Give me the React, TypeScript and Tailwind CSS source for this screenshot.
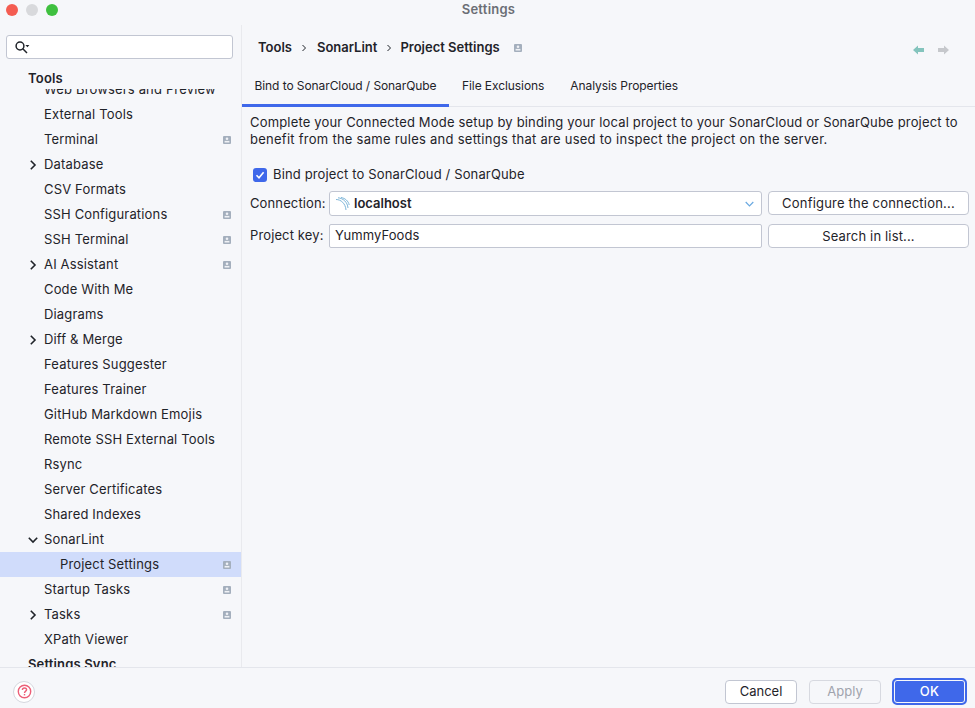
import React from "react";

const font = { fontFamily: "Inter, 'Noto Sans', sans-serif" };

function ProjectIcon({ className = "" }: { className?: string }) {
  return (
    <svg width="8" height="8" viewBox="0 0 8 8" className={className}>
      <rect width="8" height="8" rx="1" fill="#a4afbd" />
      <circle cx="4" cy="2.8" r="1.3" fill="#f0f2f6" />
      <rect x="1.6" y="4.9" width="4.8" height="1.6" fill="#f0f2f6" />
    </svg>
  );
}

function Chevron({ open }: { open?: boolean }) {
  return (
    <svg width="12" height="12" viewBox="0 0 12 12" fill="none" stroke="#1f2329" strokeWidth="1.6">
      {open ? <path d="M1.8 3.8 6 8 10.2 3.8" /> : <path d="M3.8 1.8 8 6 3.8 10.2" />}
    </svg>
  );
}

type Row = { label: string; chevron?: "open" | "closed"; project?: boolean; indent?: boolean; selected?: boolean; bold?: boolean };

const rows: Row[] = [
  { label: "Web Browsers and Preview" },
  { label: "External Tools" },
  { label: "Terminal", project: true },
  { label: "Database", chevron: "closed" },
  { label: "CSV Formats" },
  { label: "SSH Configurations", project: true },
  { label: "SSH Terminal", project: true },
  { label: "AI Assistant", chevron: "closed", project: true },
  { label: "Code With Me" },
  { label: "Diagrams" },
  { label: "Diff & Merge", chevron: "closed" },
  { label: "Features Suggester" },
  { label: "Features Trainer" },
  { label: "GitHub Markdown Emojis" },
  { label: "Remote SSH External Tools" },
  { label: "Rsync" },
  { label: "Server Certificates" },
  { label: "Shared Indexes" },
  { label: "SonarLint", chevron: "open" },
  { label: "Project Settings", project: true, indent: true, selected: true },
  { label: "Startup Tasks", project: true },
  { label: "Tasks", chevron: "closed", project: true },
  { label: "XPath Viewer" },
  { label: "Settings Sync", bold: true },
];

function SideRow({ r }: { r: Row }) {
  return (
    <div className={`h-[25px] flex items-center shrink-0 text-[13px] tracking-[0.16px] text-[#1f2329] ${r.selected ? "bg-[#d0dcfb]" : ""}`}>
      <div className={`${r.bold ? "w-[28px]" : r.indent ? "w-[60px]" : "w-[44px]"} shrink-0 flex justify-end pr-[5px]`}>
        {r.chevron && <Chevron open={r.chevron === "open"} />}
      </div>
      <span className={`flex-1 whitespace-nowrap ${r.bold ? "font-semibold" : ""}`}>{r.label}</span>
      {r.project && <ProjectIcon className="mr-[10px]" />}
    </div>
  );
}

function Button({ children, className = "" }: { children: React.ReactNode; className?: string }) {
  return (
    <div className={`flex items-center justify-center bg-white border border-[#c2c6d2] rounded-[4px] pt-[1px] text-[13px] tracking-[0.2px] text-[#1f2329] ${className}`}>
      {children}
    </div>
  );
}

export default function App() {
  return (
    <div className="w-[975px] h-[708px] bg-[#f6f7fa] flex flex-col overflow-hidden text-[#1f2329]" style={font}>
      <div className="h-[20px] shrink-0 flex items-center relative">
        <div className="flex gap-[8px] pl-[6px]">
          <div className="w-[12px] h-[12px] rounded-full bg-[#f45c51]" />
          <div className="w-[12px] h-[12px] rounded-full bg-[#d8d9dc]" />
          <div className="w-[12px] h-[12px] rounded-full bg-[#3fc03f]" />
        </div>
        <div className="absolute left-0 right-0 text-center pl-[2px] text-[13px] font-semibold text-[#6b6e75] tracking-[0.25px]">Settings</div>
      </div>

      <div className="flex-1 flex min-h-0 pt-[5px]">
        <aside className="w-[242px] shrink-0 border-r border-[#e9eaee] flex flex-col min-h-0">
          <div className="pl-[6px] pr-[8px] pt-[10px] shrink-0">
            <div className="h-[24px] bg-white border border-[#c2c6d2] rounded-[3px] flex items-center pl-[8px]">
              <svg width="15" height="13" viewBox="0 0 15 13" fill="none" stroke="#1f2329" strokeWidth="1.5">
                <circle cx="5" cy="5" r="3.9" />
                <path d="M7.8 7.8 12 12" />
                <path d="M10.4 4h4l-2 2.2z" fill="#1f2329" stroke="none" />
              </svg>
            </div>
          </div>
          <div className="flex-1 min-h-0 relative overflow-hidden pt-[18px]">
            <div className="absolute top-0 left-0 right-0 h-[30px] bg-[#f6f7fa] flex items-end pb-[1px] pl-[28px] text-[13px] font-semibold tracking-[0.2px]">Tools</div>
            {rows.map((r) => (
              <SideRow key={r.label} r={r} />
            ))}
          </div>
        </aside>

        <main className="flex-1 min-w-0 flex flex-col">
          <div className="h-[46px] shrink-0 flex items-center pl-[16px] pr-[26px] text-[13px] font-semibold">
            <span>Tools</span>
            <svg width="6" height="8" viewBox="0 0 6 8" fill="none" stroke="#1f2329" strokeWidth="1" className="ml-[9px] mr-[10px]"><path d="M1.5 1 4.5 4 1.5 7" /></svg>
            <span>SonarLint</span>
            <svg width="6" height="8" viewBox="0 0 6 8" fill="none" stroke="#1f2329" strokeWidth="1" className="ml-[9px] mr-[8px]"><path d="M1.5 1 4.5 4 1.5 7" /></svg>
            <span>Project Settings</span>
            <ProjectIcon className="ml-[14px]" />
            <div className="flex-1" />
            <svg width="11" height="10" viewBox="0 0 11 10" className="mt-[4px]"><path d="M0 5 5 0.5V3h6v4H5v2.5z" fill="#84c4bd" /></svg>
            <svg width="11" height="10" viewBox="0 0 11 10" className="ml-[14px] mt-[4px]"><path d="M11 5 6 0.5V3H0v4h6v2.5z" fill="#c6c8cc" /></svg>
          </div>

          <div className="h-[36px] shrink-0 flex border-b border-[#e4e6ec] text-[12px] tracking-[-0.08px]">
            <div className="w-[207px] h-[36px] flex items-center justify-center border-b-[3px] border-[#3f68ea] pb-[3px]">Bind to SonarCloud / SonarQube</div>
            <div className="flex items-center pl-[13px] h-[33px] pb-[3px]">File Exclusions</div>
            <div className="flex items-center pl-[26px] h-[33px] pb-[3px]">Analysis Properties</div>
          </div>

          <div className="pl-[8px] pr-[6px] flex-1 flex flex-col">
            <p className="mt-[7px] text-[13px] leading-[17px] whitespace-nowrap">
              <span className="tracking-[0.17px]">Complete your Connected Mode setup by binding your local project to your SonarCloud or SonarQube project to</span><br />
              <span className="tracking-[0.26px]">benefit from the same rules and settings that are used to inspect the project on the server.</span>
            </p>
            <div className="flex items-center mt-[17px] h-[20px] pl-[3px] text-[13px] tracking-[0.14px]">
              <div className="w-[14px] h-[14px] rounded-[3px] bg-[#3f68ea] flex items-center justify-center">
                <svg width="10" height="10" viewBox="0 0 10 10" fill="none" stroke="white" strokeWidth="1.6"><path d="M1.5 5.2 4 7.7 8.6 2.2" /></svg>
              </div>
              <span className="ml-[6px]">Bind project to SonarCloud / SonarQube</span>
            </div>
            <div className="flex items-start mt-[6px] h-[25px] text-[13px] tracking-[0.12px]">
              <span className="w-[79px] shrink-0 leading-[24px]">Connection:</span>
              <div className="w-[433px] h-[25px] bg-white border border-[#c2c6d2] rounded-[3px] flex items-center pl-[5px] pr-[7px]">
                <svg width="15" height="14" viewBox="0 0 15 14" fill="none" stroke="#7db5d8" strokeWidth="1">
                  <path d="M1 2.5C6 2.5 10.5 6.5 11 13" />
                  <path d="M3 0.8C8 1.2 12.5 5 13 11" />
                  <path d="M6 0.5C10 1.2 13.5 4 14.2 8" />
                </svg>
                <span className="ml-[4px] font-semibold tracking-[0px]">localhost</span>
                <div className="flex-1" />
                <svg width="9" height="6" viewBox="0 0 9 6" fill="none" stroke="#6aa9e0" strokeWidth="1.2"><path d="M0.7 1 4.5 4.8 8.3 1" /></svg>
              </div>
              <Button className="ml-[6px] w-[201px] h-[24px]">Configure the connection...</Button>
            </div>
            <div className="flex items-center mt-[8px] h-[24px] text-[13px] tracking-[0.12px]">
              <span className="w-[79px] shrink-0">Project key:</span>
              <div className="w-[433px] h-[24px] bg-white border border-[#c2c6d2] rounded-[2px] flex items-center pl-[5px] tracking-[0.1px]">YummyFoods</div>
              <Button className="ml-[6px] w-[201px] h-[24px] tracking-[0.15px]">Search in list...</Button>
            </div>
          </div>
        </main>
      </div>

      <footer className="h-[41px] shrink-0 border-t border-[#e4e6ec] flex items-center pt-[7px] pl-[13px] pr-[8px]">
        <div className="w-[22px] h-[22px] rounded-full bg-white border border-[#d5d7de] flex items-center justify-center">
          <svg width="15" height="15" viewBox="0 0 15 15" fill="none" stroke="#ec5f78" strokeWidth="1.4">
            <circle cx="7.5" cy="7.5" r="6.2" />
            <path d="M5.4 5.9C5.4 4.6 6.4 4 7.5 4S9.6 4.7 9.6 5.8C9.6 7.1 7.5 7.2 7.5 8.9" />
            <path d="M7.5 10v1.4" />
          </svg>
        </div>
        <div className="flex-1" />
        <div className="w-[72px] h-[24px] flex items-center justify-center bg-white border border-[#c2c6d2] rounded-[4px] text-[13px] text-[#1f2329]">Cancel</div>
        <div className="ml-[12px] w-[72px] h-[24px] flex items-center justify-center border border-[#d7d9e0] rounded-[4px] text-[13px] tracking-[0.05px] text-[#a0a3ad]">Apply</div>
        <div className="ml-[11px] w-[75px] h-[27px] flex items-center justify-center bg-[#3f68ea] rounded-[5px] border-2 border-[#3f68ea] shadow-[inset_0_0_0_1px_#f6f7fa] text-[13px] font-medium text-white tracking-[0.2px]">OK</div>
      </footer>
    </div>
  );
}
